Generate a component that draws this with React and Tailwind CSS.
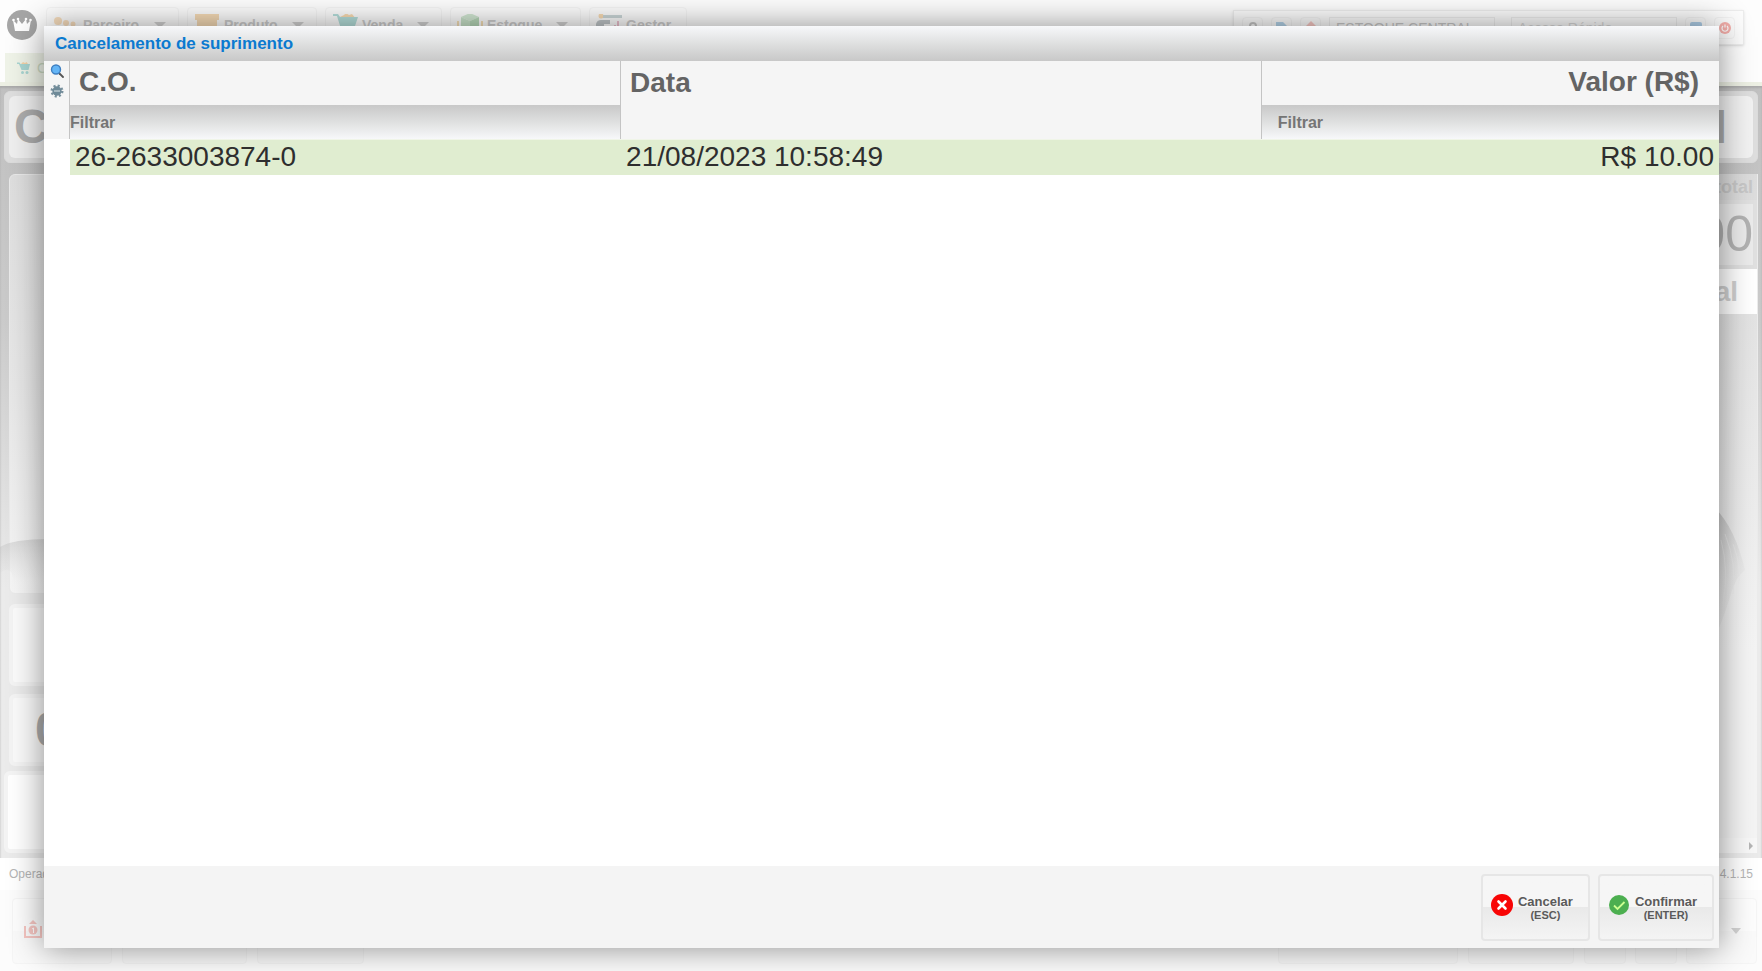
const menus = [
  { label: 'Parceiro', width: 'w-[133px]', icon: 'people', arrow: true },
  { label: 'Produto', width: 'w-[130px]', icon: 'box', arrow: true },
  { label: 'Venda', width: 'w-[117px]', icon: 'cart', arrow: true },
  { label: 'Estoque', width: 'w-[131px]', icon: 'cube', arrow: true },
  { label: 'Gestor', width: 'w-[98px]', icon: 'manager', arrow: false },
]

const rows = [{ co: '26-2633003874-0', date: '21/08/2023 10:58:49', value: 'R$ 10.00' }]

const MenuIcon = ({ name }) => (
  <svg viewBox="0 0 26 26" className="size-[26px] shrink-0" aria-hidden="true">
    {name === 'people' && (
      <g fill="#f9dfbf">
        <circle cx="5" cy="7" r="4" />
        <circle cx="13" cy="9" r="3" />
        <circle cx="20" cy="10" r="2.5" />
        <path d="M1 22q1-9 5-9t6 9zM14 22q0-8 5-8t5 8z" />
      </g>
    )}
    {name === 'box' && <path d="M1 0h24v6h-2v14H3V6H1z" fill="#f6dbb6" />}
    {name === 'cart' && (
      <>
        <path d="M8 3l4-2 2-2 3 2 3-1 4 5H8z" fill="#f9dbb2" />
        <path d="M1 0h5l2 3h18l-4 12H9L5 2H1z" fill="#b5dfdb" />
        <circle cx="11" cy="21" r="2" fill="#b5dfdb" />
        <circle cx="20" cy="21" r="2" fill="#b5dfdb" />
      </>
    )}
    {name === 'cube' && (
      <>
        <path d="M4 3l9-4 9 4-9 4z" fill="#d2e8d3" />
        <path d="M4 3l9 4v12l-9-5z" fill="#c9e3ca" />
        <path d="M22 3l-9 4v12l9-5z" fill="#b8d9ba" />
        <path d="M1 7v12M25 7v12" stroke="#f6e0b8" strokeWidth="2" />
      </>
    )}
    {name === 'manager' && (
      <>
        <circle cx="5" cy="2" r="2.5" fill="#f8dbb4" />
        <path d="M7 1h19v3H7z" fill="#cbd7d8" />
        <path d="M0 20V10q1-4 5-4h9v4H8v10z" fill="#c0c6c9" />
        <path d="M14 19v-5h2v5zM18 19v-8h2v8zM21 19V7h2v12z" fill="#ecc2cf" />
      </>
    )}
  </svg>
)

const Arrow = () => (
  <svg viewBox="0 0 12 6" className="h-[6px] w-3 shrink-0" aria-hidden="true">
    <path d="M0 0h12L6 6z" fill="#d2d2d2" />
  </svg>
)

const toolButton = 'flex h-[22px] w-[21px] items-center justify-center rounded-sm border border-[#f4f4f4]'

const TopBar = () => (
  <header className="flex h-[53px] shrink-0 items-start bg-[#fdfdfd]">
    <div className="ml-[7px] mt-[10px] flex size-[30px] items-center justify-center rounded-full bg-[#a6a6a6]">
      <svg viewBox="0 0 20 16" className="h-4 w-5" aria-hidden="true">
        <path d="M1 3l4 4 1-5 4 5 4-5 1 5 4-4-2 11H3z" fill="#fff" />
        <circle cx="1.500" cy="3" r="1.300" fill="#fff" />
        <circle cx="6" cy="2" r="1.300" fill="#fff" />
        <circle cx="14" cy="2" r="1.300" fill="#fff" />
        <circle cx="18.500" cy="3" r="1.300" fill="#fff" />
      </svg>
    </div>
    <nav className="ml-[9px] mt-[7px] flex gap-2">
      {menus.map((menu) => (
        <button
          key={menu.label}
          className={`flex h-9 items-center rounded-sm border border-[#f5f5f5] pl-[6px] text-sm font-bold text-[#cdcdcd] ${menu.width}`}
        >
          <span className="mt-1">
            <MenuIcon name={menu.icon} />
          </span>
          <span className="flex-1 pl-1 text-left">{menu.label}</span>
          {menu.arrow && (
            <span className="pr-3">
              <Arrow />
            </span>
          )}
        </button>
      ))}
    </nav>
    <div className="ml-auto mr-[18px] mt-[10px] flex h-[35px] items-center gap-2 border border-[#ededed] bg-[#fdfdfd] px-2 shadow-sm">
      <button className={toolButton} aria-label="Bloquear">
        <svg viewBox="0 0 12 12" className="size-3">
          <path d="M3 6V4a3 3 0 016 0v2" fill="none" stroke="#c6c6c6" strokeWidth="2" />
          <path d="M2 5h8v7H2z" fill="#f1e0b4" />
        </svg>
      </button>
      <button className={toolButton} aria-label="Documento">
        <svg viewBox="0 0 12 12" className="size-3">
          <path d="M0 0h7l4 4v8H0z" fill="#b5d4ea" />
        </svg>
      </button>
      <button className={toolButton} aria-label="Alerta">
        <svg viewBox="0 0 14 14" className="size-[14px]">
          <path d="M7 0l7 7-7 7-7-7z" fill="#f8c9c5" />
        </svg>
      </button>
      <input
        className="h-[22px] w-[166px] border border-[#eeeeee] px-[6px] text-sm text-[#c8c8c8]"
        aria-label="Estoque"
        defaultValue="ESTOQUE CENTRAL"
      />
      <input
        className="ml-2 h-[22px] w-[166px] border border-[#eeeeee] px-[6px] text-sm placeholder:text-[#dadada]"
        aria-label="Acesso Rápido"
        placeholder="Acesso Rápido"
      />
      <button className={toolButton} aria-label="Ajuda">
        <svg viewBox="0 0 12 12" className="size-3">
          <rect width="12" height="12" rx="2" fill="#b0d0ea" />
        </svg>
      </button>
      <button className={toolButton} aria-label="Sair">
        <svg viewBox="0 0 12 12" className="size-3 shrink-0">
          <circle cx="6" cy="6" r="6" fill="#f6b0ac" />
          <path d="M4 4a3 3 0 104 0M6 2.500v3" fill="none" stroke="#fff" strokeWidth="1.200" />
        </svg>
      </button>
    </div>
  </header>
)

const Workspace = () => (
  <main className="flex min-h-0 flex-1 flex-col bg-linear-to-b from-[#c0c0c0] via-[#cacaca] via-30% to-[#ebebeb] to-65% px-1 pt-[5px] pb-[5px] shadow-[inset_0_2px_2px_#ababab]">
    <div className="h-[72px] shrink-0 rounded-md border border-[#dcdcdc] bg-[#dedede] p-1">
      <div className="flex h-full items-center justify-between rounded-md bg-linear-to-r from-[#efefef] to-[#f2f2f2] pl-[5px] pr-[26px] text-5xl font-bold text-[#adadad]">
        <span>CAIXA</span>
        <span>EM</span>
      </div>
    </div>
    <div className="mt-[11px] flex min-h-0 flex-1 justify-between">
      <div className="flex w-1/2 flex-col">
        <div className="relative ml-[5px] flex-1 rounded-md border border-[#eaeaea] bg-linear-to-b from-[#dedede] via-[#e7e7e7] to-[#f5f5f5]">
          <svg viewBox="0 0 50 60" className="absolute bottom-0 -left-[10px] h-[60px] w-[50px]" aria-hidden="true">
            <defs>
              <linearGradient id="brow" x1="0" y1="0" x2="0" y2="1">
                <stop offset="0" stopColor="#b4b4b4" stopOpacity="0.4" />
                <stop offset="1" stopColor="#d0d0d0" stopOpacity="0" />
              </linearGradient>
            </defs>
            <path d="M0 14Q12 6 50 6v44H14Q12 30 0 40z" fill="url(#brow)" />
          </svg>
        </div>
        <div className="mt-[10px] ml-[5px] h-[82px] rounded-md border-4 border-[#f4f4f4] bg-[#fbfbfb]" />
        <div className="mt-2 ml-[5px] flex h-[72px] items-center rounded-md border-4 border-[#f4f4f4] bg-[#fafafa] pl-[22px] text-5xl font-bold text-[#adadad]">
          0
        </div>
        <div className="mt-[5px] h-[82px] rounded-md border-4 border-[#f4f4f4] bg-white" />
      </div>
      <div className="flex w-1/4 flex-col border-r border-[#ececec] bg-linear-to-b from-[#dcdcdc] to-[#f4f4f4] to-70%">
        <div className="flex h-[26px] items-center justify-end pr-1 text-lg font-bold text-[#c8c8c8]">Subtotal</div>
        <div className="flex h-[69px] items-center justify-end border-4 border-[#e0e0e0] bg-[#ebebeb] text-[50px] text-[#b2b2b2]">
          0,00
        </div>
        <div className="flex h-[45px] items-center justify-end bg-white pr-[19px] text-[28px] font-bold text-[#d0d0d0]">
          Total
        </div>
        <div className="relative flex-1 overflow-hidden">
          <svg viewBox="0 0 50 150" className="absolute top-[190px] right-0 h-[150px] w-[50px]" aria-hidden="true">
            <defs>
              <linearGradient id="hair" x1="0" y1="0" x2="0.700" y2="1">
                <stop offset="0" stopColor="#b0b0b0" stopOpacity="0.700" />
                <stop offset="1" stopColor="#e0e0e0" stopOpacity="0" />
              </linearGradient>
            </defs>
            <path d="M8 4Q28 24 38 66q-10 8-14 24-6 20-16 44z" fill="url(#hair)" />
            <path d="M18 30q12 30 8 60M14 36q8 30 2 64M26 40q8 20 6 40" fill="none" stroke="#ececec" opacity="0.600" />
          </svg>
        </div>
        <div className="flex h-[15px] items-center justify-end bg-[#f7f7f7] pr-1">
          <svg viewBox="0 0 4 8" className="h-2 w-1" aria-hidden="true">
            <path d="M0 0l4 4-4 4z" fill="#b5b5b5" />
          </svg>
        </div>
      </div>
    </div>
  </main>
)

const bottomBox = 'h-[66px] rounded-sm border border-[#f5f5f5] bg-linear-to-b from-[#fdfdfd] from-50% to-[#fafafa] to-50%'

const Background = () => (
  <div className="flex h-screen flex-col overflow-hidden bg-white">
    <TopBar />
    <div className="flex h-[33px] shrink-0 flex-col border-b-4 border-[#edf0e4] bg-[#fdfdfd]">
      <div className="ml-[5px] flex flex-1 items-center gap-[7px] self-start bg-[#eff3e8] px-3 text-sm text-[#cbd9c2]">
        <svg viewBox="0 0 26 24" className="h-3 w-[13px]" aria-hidden="true">
          <path d="M8 4l4-4 4 2 3-2 3 4z" fill="#f5d3a8" />
          <path d="M0 1h5l2 3h19l-3 12H9L4 4H0z" fill="#a9d6d2" />
          <circle cx="11" cy="21" r="3" fill="#a9d6d2" />
          <circle cx="20" cy="21" r="3" fill="#a9d6d2" />
        </svg>
        Caixa
      </div>
    </div>
    <Workspace />
    <div className="flex h-8 shrink-0 items-center justify-between bg-white px-[9px] text-xs text-[#b5b5b5]">
      <span>Operador</span>
      <span>4.1.15</span>
    </div>
    <footer className="flex h-[81px] shrink-0 items-start bg-[#fcfcfc] pt-2 pr-[5px] pl-3">
      <div className={`flex w-[100px] items-center pb-1 pl-[11px] ${bottomBox}`}>
        <svg viewBox="0 0 18 18" className="size-[18px]" aria-hidden="true">
          <path d="M1 6v11h16V6" fill="none" stroke="#f6c6c2" strokeWidth="2" />
          <path d="M9 0l4 4H5z" fill="#f6c6c2" />
          <circle cx="9" cy="10" r="4.500" fill="#f6c6c2" />
          <path d="M8 9l1.500-1v5" fill="none" stroke="#fff" />
        </svg>
      </div>
      <div className={`ml-[10px] w-[125px] ${bottomBox}`} />
      <div className={`ml-[10px] w-[107px] ${bottomBox}`} />
      <div className={`ml-auto w-[180px] ${bottomBox}`} />
      <div className={`ml-[10px] w-[106px] ${bottomBox}`} />
      <div className={`ml-[10px] w-[42px] ${bottomBox}`} />
      <div className={`ml-[9px] w-[42px] ${bottomBox}`} />
      <div className={`ml-[9px] flex w-[71px] items-center justify-end pr-[15px] ${bottomBox}`}>
        <svg viewBox="0 0 10 6" className="h-[6px] w-[10px]" aria-hidden="true">
          <path d="M0 0h10L5 6z" fill="#d3d3d3" />
        </svg>
      </div>
    </footer>
  </div>
)

const filterCell = 'bg-linear-to-b from-[#c8c8c8] via-[#dfe0e0] to-[#f7f8fa] p-0 text-base leading-5 font-bold'
const filterInput = 'mt-[2px] block h-5 w-full text-[#757575] outline-none placeholder:text-[#757575]'

const DataGrid = () => (
  <table className="w-full table-fixed border-separate border-spacing-0 text-[28px] leading-8 text-[#2e2e2e]">
    <colgroup>
      <col className="w-[26px]" />
      <col className="w-[32.9%]" />
      <col className="w-[38.25%]" />
      <col />
    </colgroup>
    <thead className="bg-[#f5f5f5] text-[#646464]">
      <tr className="h-11">
        <th rowSpan={2} className="border-r border-[#c4c4c4] p-0 align-top">
          <div className="flex flex-col items-center gap-[6px] pt-[3px]">
            <button aria-label="Pesquisar">
              <svg viewBox="0 0 14 14" className="block size-[14px]">
                <path d="M9.500 9.500l3.500 3.500" stroke="#555" strokeWidth="1.800" strokeLinecap="round" />
                <circle cx="6" cy="5.500" r="4.500" fill="#64b5f6" stroke="#3f7fc1" strokeWidth="1.400" />
              </svg>
            </button>
            <button aria-label="Configurar">
              <svg viewBox="0 0 14 14" className="block size-[14px]">
                <circle cx="7" cy="7" r="5.300" fill="none" stroke="#78909c" strokeWidth="2.400" strokeDasharray="2.080 2.080" />
                <circle cx="7" cy="7" r="4.700" fill="#6f8a98" />
                <path d="M4 7h6" stroke="#b5c4cb" strokeWidth="1.600" />
              </svg>
            </button>
          </div>
        </th>
        <th className="border-r border-[#c4c4c4] p-0 pb-[2px] pl-[9px] text-left">C.O.</th>
        <th rowSpan={2} className="border-r border-[#c4c4c4] p-0 pt-[6px] pl-[9px] text-left align-top">
          Data
        </th>
        <th className="p-0 pr-5 pb-[2px] text-right">Valor (R$)</th>
      </tr>
      <tr className="h-[34px]">
        <th className={`border-r border-[#c4c4c4] ${filterCell}`}>
          <input className={filterInput} aria-label="Filtrar C.O." placeholder="Filtrar" />
        </th>
        <th className={filterCell}>
          <input className={`${filterInput} pl-4`} aria-label="Filtrar valor" placeholder="Filtrar" />
        </th>
      </tr>
    </thead>
    <tbody>
      {rows.map((row) => (
        <tr key={row.co} className="h-9">
          <td className="p-0" />
          <td className="border-t border-[#f0f5e8] bg-[#e0edd0] p-0 pb-px pl-[5px]">{row.co}</td>
          <td className="border-t border-[#f0f5e8] bg-[#e0edd0] p-0 pb-px pl-[5px]">{row.date}</td>
          <td className="border-t border-[#f0f5e8] bg-[#e0edd0] p-0 pr-[5px] pb-px text-right">{row.value}</td>
        </tr>
      ))}
    </tbody>
  </table>
)

const ActionButton = ({ label, shortcut, children }) => (
  <button className="flex h-[67px] items-center gap-[5px] rounded-sm border-2 border-[#e6e6e6] bg-linear-to-b from-[#f6f6f6] from-50% via-[#e9e9e9] via-50% to-[#f4f4f4] pr-[15px] pl-2 font-bold text-[#5a5a5a]">
    <span className="flex w-[22px] justify-center pb-[6px]">{children}</span>
    <span className="flex flex-col text-[13px] leading-[14px]">
      {label}
      <span className="text-[11px] leading-3">({shortcut})</span>
    </span>
  </button>
)

const App = () => {
  return (
    <div className="relative font-['Liberation_Sans',Arial,sans-serif]">
      <Background />

      {/* Dialog */}
      <section
        role="dialog"
        aria-labelledby="dialog-title"
        className="absolute top-[26px] right-[43px] bottom-[23px] left-11 flex flex-col bg-white shadow-[0_0_32px_rgba(0,0,0,0.45)]"
      >
        <h1
          id="dialog-title"
          className="flex h-[35px] shrink-0 items-center bg-linear-to-b from-[#f7f8fa] via-[#dfe0e0] to-[#c8c8c8] pl-[11px] text-[17px] font-bold text-[#0b7ad0]"
        >
          Cancelamento de suprimento
        </h1>
        <div className="min-h-0 flex-1 overflow-auto">
          <DataGrid />
        </div>
        <div className="flex h-[82px] shrink-0 items-start justify-end gap-2 bg-[#f4f4f4] pt-2 pr-[5px]">
          <ActionButton label="Cancelar" shortcut="ESC">
            <svg viewBox="0 0 22 22" className="size-[22px]" aria-hidden="true">
              <circle cx="11" cy="11" r="11" fill="#f80505" />
              <path d="M7.500 7.500l7 7M14.500 7.500l-7 7" stroke="#fff" strokeWidth="2.600" strokeLinecap="round" />
            </svg>
          </ActionButton>
          <ActionButton label="Confirmar" shortcut="ENTER">
            <svg viewBox="0 0 20 20" className="size-5" aria-hidden="true">
              <circle cx="10" cy="10" r="10" fill="#4caf50" />
              <path d="M5 10.500l3.500 3.500L15.500 7" fill="none" stroke="#ccff90" strokeWidth="1.800" />
            </svg>
          </ActionButton>
        </div>
      </section>
    </div>
  )
}

export default App
